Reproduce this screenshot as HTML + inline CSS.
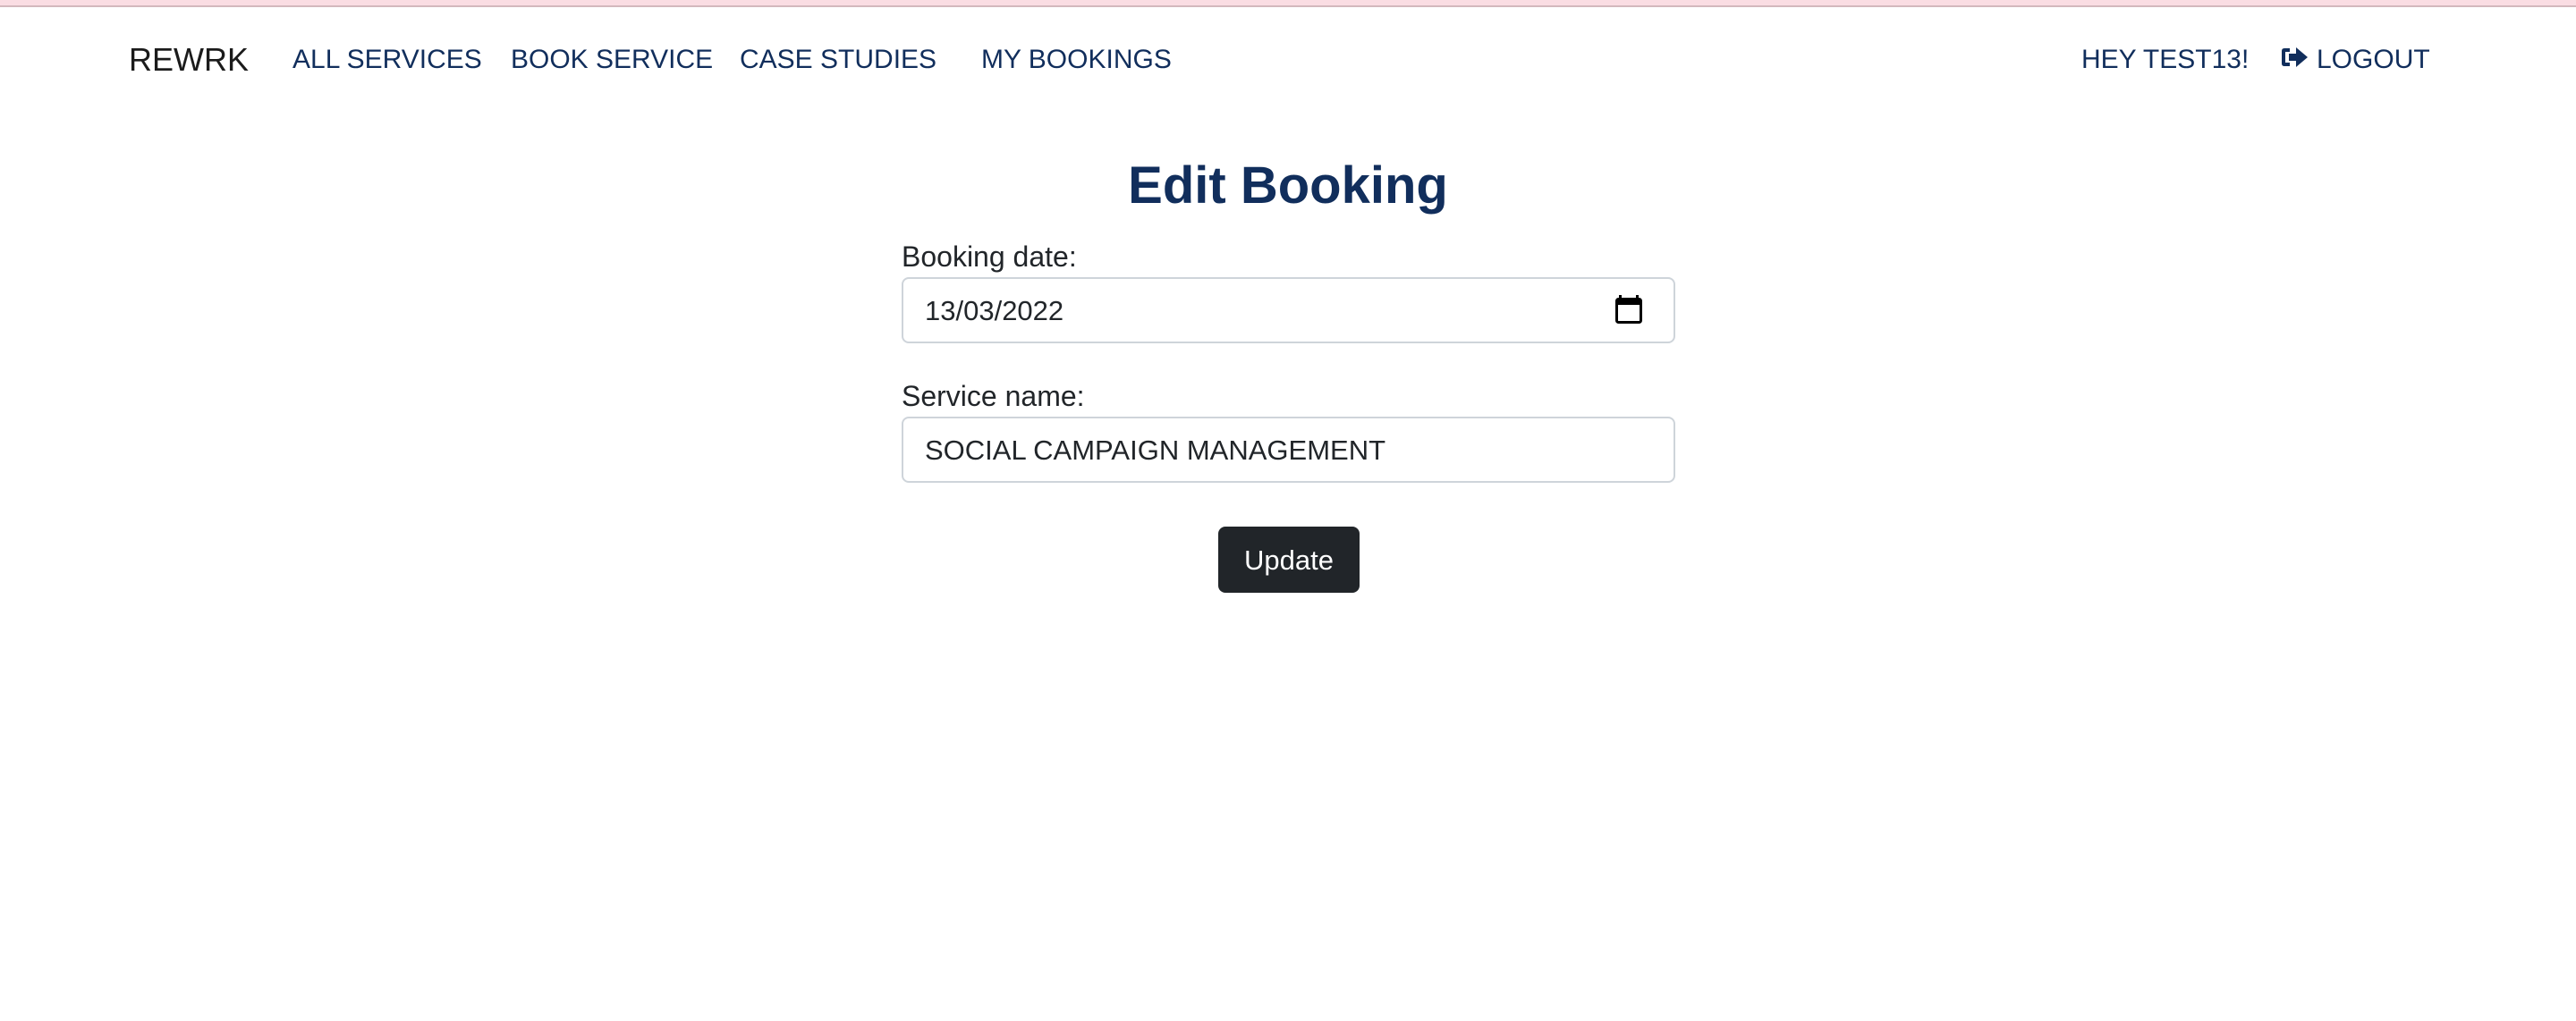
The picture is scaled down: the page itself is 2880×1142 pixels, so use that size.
<!DOCTYPE html>
<html><head><meta charset="utf-8"><style>
html,body{margin:0;padding:0;background:#fff;width:2880px;height:1142px;overflow:hidden;font-family:"Liberation Sans",sans-serif;}
.t{position:absolute;white-space:nowrap;line-height:1;}
.nav{color:#112e5c;font-size:30px;top:52px;}
.lbl{color:#212529;font-size:32px;}
.inp{position:absolute;left:1008px;width:861px;height:70px;border:2px solid #ced4da;border-radius:8px;background:#fff;}
.val{position:absolute;left:1034px;color:#212529;font-size:31px;line-height:1;}
</style></head><body>
<div style="position:absolute;left:0;top:0;width:2880px;height:6px;background:#fadde3"></div>
<div style="position:absolute;left:0;top:6px;width:2880px;height:2px;background:#d3b8bd"></div>

<div class="t" style="left:144px;top:49px;font-size:36px;color:#1b1b1b;">REWRK</div>
<div class="t nav" style="left:327px;">ALL SERVICES</div>
<div class="t nav" style="left:571px;">BOOK SERVICE</div>
<div class="t nav" style="left:827px;">CASE STUDIES</div>
<div class="t nav" style="left:1097px;">MY BOOKINGS</div>
<div class="t nav" style="left:2327px;">HEY TEST13!</div>
<svg style="position:absolute;left:2549px;top:52px" width="32" height="24" viewBox="0 0 32 24">
<path d="M11 2H5Q2 2 2 5V19Q2 22 5 22H11V18H6V6H11Z" fill="#112e5c"/>
<path d="M10 8H18V1L31 12L18 23V16H10Z" fill="#112e5c"/>
</svg>
<div class="t nav" style="left:2590px;">LOGOUT</div>

<div class="t" style="left:0;width:2880px;text-align:center;top:179px;font-size:58px;font-weight:bold;color:#112e5c;">Edit Booking</div>

<div class="t lbl" style="left:1008px;top:271px;">Booking date:</div>
<div class="inp" style="top:310px;"></div>
<div class="val" style="top:332px;">13/03/2022</div>
<svg style="position:absolute;left:1806px;top:330px" width="30" height="32" viewBox="0 0 30 32">
<rect x="4" y="0" width="3" height="6" fill="#000"/><rect x="23" y="0" width="3" height="6" fill="#000"/>
<rect x="1.5" y="4.5" width="27" height="26" rx="2" fill="none" stroke="#000" stroke-width="3"/>
<rect x="1" y="4" width="28" height="7" fill="#000"/>
</svg>

<div class="t lbl" style="left:1008px;top:427px;">Service name:</div>
<div class="inp" style="top:466px;"></div>
<div class="val" style="top:488px;">SOCIAL CAMPAIGN MANAGEMENT</div>

<div style="position:absolute;left:1362px;top:589px;width:158px;height:74px;background:#212529;border-radius:8px;color:#fff;font-size:31px;line-height:76px;text-align:center;">Update</div>
</body></html>
